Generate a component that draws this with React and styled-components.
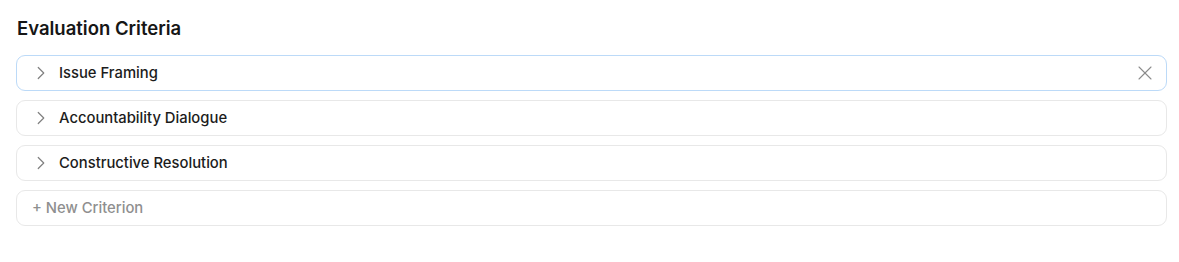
import React from 'react'
import styled, { createGlobalStyle } from 'styled-components'
import { ChevronRight, X } from 'lucide-react'

const Global = createGlobalStyle`
  body {
    margin: 0;
    background: #fff;
    font-family: Inter, "Noto Sans", sans-serif;
    color: #1a1a1a;
  }
`

const Page = styled.div`
  padding: 16px 12px 0 16px;
`

const Title = styled.h2`
  margin: 0 0 15px 1px;
  font-size: 18.5px;
  font-weight: 600;
  line-height: 24px;
  color: #161616;
`

const List = styled.div`
  display: flex;
  flex-direction: column;
  gap: 9px;
`

const Row = styled.div`
  display: flex;
  align-items: center;
  height: 36px;
  box-sizing: border-box;
  border: 1px solid ${p => (p.active ? '#bcdaf8' : '#e8e8e8')};
  border-radius: 9px;
  padding: 0 9px 0 13px;
  background: #fff;
`

const Chevron = styled(ChevronRight)`
  color: #808080;
  flex: none;
  margin-right: 7px;
`

const Label = styled.span`
  flex: 1;
  font-size: 14.8px;
  font-weight: 500;
  color: #1c1c1c;
`

const AddLabel = styled.span`
  font-size: 14.8px;
  font-weight: 500;
  color: #8f8f8f;
  margin-left: 2px;
`

const Close = styled(X)`
  color: #8c8c8c;
  flex: none;
`

const criteria = ['Issue Framing', 'Accountability Dialogue', 'Constructive Resolution']

export default function App() {
  return (
    <Page>
      <Global />
      <Title>Evaluation Criteria</Title>
      <List>
        {criteria.map((c, i) => (
          <Row key={c} active={i === 0}>
            <Chevron size={22} strokeWidth={1.3} />
            <Label>{c}</Label>
            {i === 0 && <Close size={24} strokeWidth={1.1} />}
          </Row>
        ))}
        <Row>
          <AddLabel>+ New Criterion</AddLabel>
        </Row>
      </List>
    </Page>
  )
}
